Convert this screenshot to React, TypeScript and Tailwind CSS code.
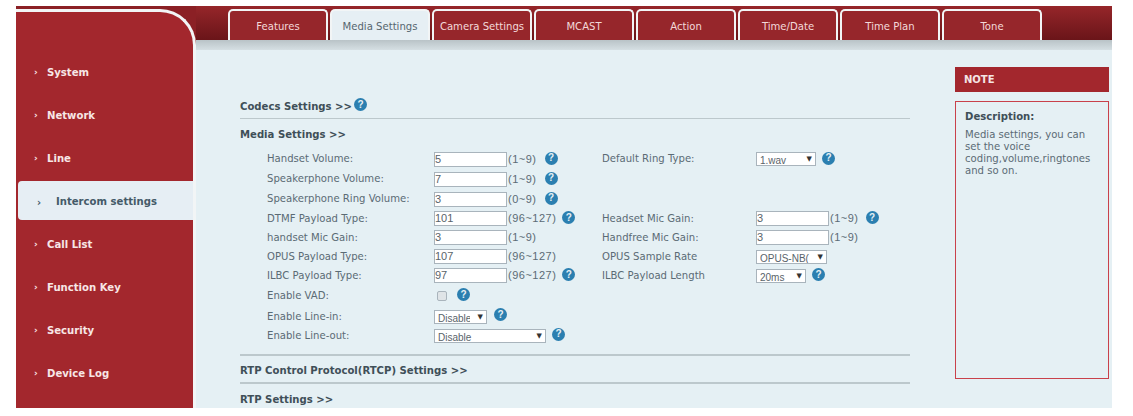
import type { ReactNode } from "react"

const menu = ["System", "Network", "Line", "Intercom settings", "Call List", "Function Key", "Security", "Device Log"]
const tabs = ["Features", "Media Settings", "Camera Settings", "MCAST", "Action", "Time/Date", "Time Plan", "Tone"]

function Help({ className = "" }: { className?: string }) {
  return (
    <span className={`inline-flex h-[13px] w-[13px] shrink-0 items-center justify-center rounded-full bg-[#2b7fb0] font-['Liberation_Sans',sans-serif] text-[10px] leading-none font-bold text-[#e6f0f4] ${className}`}>
      ?
    </span>
  )
}

function TextBox({ value }: { value: string }) {
  return (
    <input
      readOnly
      value={value}
      className="h-[15px] w-[73px] shrink-0 border border-[#a9b4bc] bg-white px-0 font-['Liberation_Sans',sans-serif] text-[11px] text-[#59636a] outline-none"
    />
  )
}

function Dropdown({ value, width }: { value: string; width: string }) {
  return (
    <span className={`relative flex h-[14px] shrink-0 ${width}`}>
      <select
        defaultValue={value}
        className="h-full w-full appearance-none rounded-none border border-[#a9b4bc] bg-white pr-[16px] pl-[3px] font-['Liberation_Sans',sans-serif] text-[10px] text-[#59636a] outline-none"
      >
        <option>{value}</option>
      </select>
      <span className="pointer-events-none absolute top-[3px] right-[4px] bg-white pl-px font-['DejaVu_Sans',sans-serif] text-[7px] leading-[8px] text-[#333]">▼</span>
    </span>
  )
}

function Range({ text }: { text: string }) {
  return <span className="ml-px font-['Liberation_Sans',sans-serif] text-[11px] tracking-[0.5px] whitespace-nowrap">{text}</span>
}

function Row({ h, label, left, right, rightLabel }: { h: string; label: string; left: ReactNode; rightLabel?: string; right?: ReactNode }) {
  return (
    <div className={`flex items-center ${h}`}>
      <span className="w-[194px] shrink-0 pl-[27px] whitespace-nowrap">{label}</span>
      <span className="flex w-[168px] shrink-0 items-center">{left}</span>
      <span className="w-[154px] shrink-0 whitespace-nowrap">{rightLabel}</span>
      <span className="flex items-center">{right}</span>
    </div>
  )
}

export default function App() {
  return (
    <div className="min-h-[416px] bg-white pt-[6px] pl-[16px] font-['DejaVu_Sans',sans-serif]">
      <div className="flex h-[402px] w-[1096px] overflow-hidden bg-[#e5f0f4]">
        {/* left menu */}
        <div className="w-[180px] shrink-0 bg-[#8b2025]">
          <div className="mt-[3px] h-[399px] rounded-tr-[36px] border-t-[3px] border-r-[3px] border-[#f2f5f6] bg-[#a3272d] pt-[38px]">
            {menu.map((item) =>
              item === "Intercom settings" ? (
                <div key={item} className="flex h-[43px] items-center pl-[2px]">
                  <div className="flex h-[39px] w-full items-center rounded-l-[4px] bg-[#e6eef4] pt-[3px] pl-[19px] text-[10.1px] font-bold text-[#445a68]">
                    <span className="w-[19px] text-[10px]">›</span>
                    {item}
                  </div>
                </div>
              ) : (
                <div key={item} className="flex h-[43px] items-center pt-[3px] pl-[18px] text-[10.1px] font-bold text-[#f7e6e6]">
                  <span className="w-[13px] text-[9px]">›</span>
                  {item}
                </div>
              ),
            )}
          </div>
        </div>

        <div className="min-w-0 flex-1">
          {/* tabs */}
          <div className="flex h-[34px] items-end gap-[2px] bg-linear-to-b from-[#96262a] to-[#6a1519] pl-[32px]">
            {tabs.map((tab) => (
              <div
                key={tab}
                className={
                  tab === "Media Settings"
                    ? "flex h-[31px] w-[100px] items-center justify-center rounded-t-[5px] border-x-2 border-t-2 border-[#f2f5f6] bg-[#e6eff4] pt-[3px] text-[10.1px] whitespace-nowrap text-[#56666f]"
                    : "flex h-[31px] w-[100px] items-center justify-center rounded-t-[5px] border-x-2 border-t-2 border-[#f2f5f6] bg-[#96262b] pt-[3px] text-[10.1px] whitespace-nowrap text-[#f3d9d9]"
                }
              >
                {tab}
              </div>
            ))}
          </div>
          <div className="h-[10px] bg-linear-to-b from-[#b9c3c7] to-[#d5dfe3]" />

          <div className="flex">
            {/* form */}
            <div className="w-[714px] shrink-0 pt-[48px] pl-[44px] text-[10.1px] text-[#5b6b74]">
              <div className="flex h-[21px] items-center gap-[2px] border-b border-[#bcc8cc] pb-[3px] font-bold text-[#3f4f58]">
                Codecs Settings &gt;&gt; <Help className="-translate-y-[2px]" />
              </div>
              <div className="flex h-[26px] items-center pt-[6px] font-bold text-[#3f4f58]">Media Settings &gt;&gt;</div>

              <div className="mt-[4px]">
                <Row h="h-[20px]" label="Handset Volume:" left={<><TextBox value="5" /><Range text="(1~9)" /><Help className="ml-[8px] -translate-y-px" /></>} rightLabel="Default Ring Type:" right={<><Dropdown value="1.wav" width="w-[60px]" /><Help className="ml-[6px] -translate-y-px" /></>} />
                <Row h="h-[20px]" label="Speakerphone Volume:" left={<><TextBox value="7" /><Range text="(1~9)" /><Help className="ml-[8px] -translate-y-px" /></>} />
                <Row h="h-[20px]" label="Speakerphone Ring Volume:" left={<><TextBox value="3" /><Range text="(0~9)" /><Help className="ml-[8px] -translate-y-px" /></>} />
                <Row h="h-[19px]" label="DTMF Payload Type:" left={<><TextBox value="101" /><Range text="(96~127)" /><Help className="ml-[6px] -translate-y-px" /></>} rightLabel="Headset Mic Gain:" right={<><TextBox value="3" /><Range text="(1~9)" /><Help className="ml-[7px] -translate-y-px" /></>} />
                <Row h="h-[19px]" label="handset Mic Gain:" left={<><TextBox value="3" /><Range text="(1~9)" /></>} rightLabel="Handfree Mic Gain:" right={<><TextBox value="3" /><Range text="(1~9)" /></>} />
                <Row h="h-[19px]" label="OPUS Payload Type:" left={<><TextBox value="107" /><Range text="(96~127)" /></>} rightLabel="OPUS Sample Rate" right={<Dropdown value="OPUS-NB(" width="w-[71px]" />} />
                <Row h="h-[19px]" label="ILBC Payload Type:" left={<><TextBox value="97" /><Range text="(96~127)" /><Help className="ml-[6px] -translate-y-px" /></>} rightLabel="ILBC Payload Length" right={<><Dropdown value="20ms" width="w-[50px]" /><Help className="ml-[6px] -translate-y-px" /></>} />
                <Row h="h-[21px]" label="Enable VAD:" left={<><span className="ml-[3px] h-[10px] w-[10px] rounded-[2px] border border-[#a9b4bc] bg-[#dfe4e7]" /><Help className="ml-[10px] -translate-y-px" /></>} />
                <Row h="h-[21px]" label="Enable Line-in:" left={<><Dropdown value="Disable" width="w-[53px]" /><Help className="ml-[7px] -translate-y-[2px]" /></>} />
                <Row h="h-[18px]" label="Enable Line-out:" left={<><Dropdown value="Disable" width="w-[112px]" /><Help className="ml-[6px] -translate-y-[2px]" /></>} />
              </div>

              <div className="mt-[9px] flex h-[28px] items-center border-t-2 border-[#bcc8cc] pt-[4px] font-bold text-[#3f4f58]">RTP Control Protocol(RTCP) Settings &gt;&gt;</div>
              <div className="flex h-[28px] items-center border-t-2 border-[#bcc8cc] pt-[5px] font-bold text-[#3f4f58]">RTP Settings &gt;&gt;</div>
            </div>

            {/* note */}
            <div className="ml-[45px] w-[154px] shrink-0 pt-[17px]">
              <div className="flex h-[25px] items-center bg-[#a3272d] pl-[9px] text-[10px] font-bold text-[#f5e4e4]">NOTE</div>
              <div className="mt-[9px] h-[278px] border border-[#c9414b] px-[9px] pt-[9px] text-[10.1px] leading-[12px] text-[#5b6b74]">
                <div className="mb-[6px] font-bold text-[#3f4f58]">Description:</div>
                Media settings, you can set the voice coding,volume,ringtones and so on.
              </div>
            </div>
          </div>
        </div>
      </div>
    </div>
  )
}
